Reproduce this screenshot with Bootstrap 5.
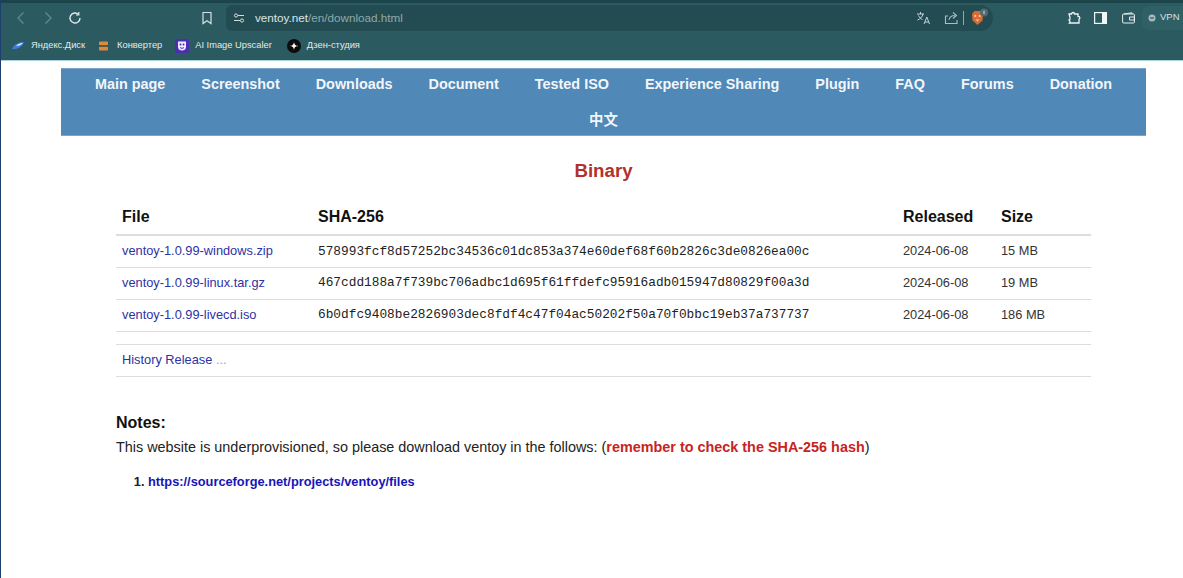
<!DOCTYPE html>
<html lang="en"><head><meta charset="utf-8"><title>Ventoy</title>
<link rel="stylesheet" href="https://cdn.jsdelivr.net/npm/bootstrap@5.3.0/dist/css/bootstrap.min.css">
<style>
html,body{height:578px;overflow:hidden}
body{font-family:"Liberation Sans",Arial,sans-serif;background:#fff;color:#222;border-left:1px solid #1c3f6e}
.chrome-top{background:#2b5a60;border-top:3px solid #1c454b;height:61px;border-bottom:1px solid #a9d3dc;color:#d4e2e3}
.tool-row{height:29px;padding:0 0 0 6px}
.nav-ic{width:27px;display:flex;justify-content:center}
.tool-gap{width:113px}
.url-box{width:767px;height:26px;margin-left:13px;background:#234c52;border-radius:6px 13px 13px 6px;padding:0 0 0 6px;font-size:11.7px;color:#8fa9ab}
.url-box b{font-weight:400;color:#dbe6e7}
.url-addr{margin-left:9px}
.url-tools{width:73px;margin-right:4px}
.vpn-pill{background:#2f6066;border-radius:7px 0 0 7px;height:24px;width:41px;padding:0 0 0 6px;margin-left:-6px;font-size:9.5px;color:#d4e2e3}
.bm-row{height:27px;padding-left:10px;font-size:9.3px;color:#e2ecec}
.bm-item{gap:6px}
.bm-next{margin-left:13px}
.bm-wide{gap:8px}
.bm-last{margin-left:15px}
.site-wrap{margin:7px 37px 0 60px}
.site-menu{background:#5088b8;border:1px solid #7ba6c9;border-width:1px 0}
.site-menu a{display:block;color:#f2f6fa;font-weight:700;font-size:14.4px;line-height:31px;padding:0 18px 1px;text-decoration:none}
.site-menu .menu-cn{font-family:"Noto Sans CJK SC","Liberation Sans",sans-serif;width:100%;text-align:center;line-height:33px;padding:1px 18px 0}
.page-title{color:#b4302a;font-size:18.7px;font-weight:700;line-height:24px;margin:23px 0 0;text-align:center}
.data-wrap{margin:15px 55px 0}
.file-table{margin:0;font-size:12.8px;table-layout:fixed;--bs-table-color:#333}
.file-table th{font-size:16px;color:#111;height:37px;padding:1px 6px 0;vertical-align:middle;border-bottom:2px solid #ddd}
.file-table td{height:32px;padding:0 6px 1px;vertical-align:middle;border-bottom:1px solid #ddd;color:#333}
.file-table a,.hist a{color:#2d32a6;text-decoration:none}
.file-table code{font-family:"Liberation Mono",monospace;font-size:12.8px;color:#222;padding:0}
.hist{margin-top:12px;height:33px;border-top:1px solid #ddd;border-bottom:1px solid #ddd;padding:0 6px;font-size:12.8px;display:flex;align-items:center}
.hist span{color:#9a9ac8}
.notes-head{font-size:16px;font-weight:700;color:#111;line-height:20px;margin:36px 55px 0}
.notes-text{font-size:14.4px;line-height:20px;margin:4px 55px 0;color:#222}
.notes-text strong{color:#c8241e}
.notes-list{margin:15px 55px 0;padding-left:32px;font-size:12.8px;font-weight:700;color:#222;line-height:20px}
.notes-list a{color:#1515b8;text-decoration:none}
</style></head><body>
<header class="chrome-top">
 <div class="tool-row d-flex align-items-center">
  <div class="nav-ic"><svg width="12" height="14" viewBox="0 0 12 14" fill="none" stroke="#5d8a90" stroke-width="1.4"><path d="M8.500 1.500 3 7l5.500 5.500"/></svg></div>
  <div class="nav-ic"><svg width="12" height="14" viewBox="0 0 12 14" fill="none" stroke="#5d8a90" stroke-width="1.4"><path d="M3.500 1.500 9 7l-5.500 5.500"/></svg></div>
  <div class="nav-ic"><svg width="14" height="14" viewBox="0 0 14 14" fill="none" stroke="#dfe9ea" stroke-width="1.4"><path d="M12 7a5 5 0 1 1-1.600-3.700"/><path d="M10.800 1v3H8" stroke-width="1.2"/></svg></div>
  <div class="tool-gap"></div>
  <svg width="12" height="14" viewBox="0 0 12 14" fill="none" stroke="#d4e2e3" stroke-width="1.2"><path d="M2 1.500h8v11L6 9.800 2 12.500z"/></svg>
  <div class="url-box d-flex align-items-center">
   <svg width="14" height="12" viewBox="0 0 14 12" fill="none" stroke="#cfdcdd" stroke-width="1"><circle cx="4" cy="3.500" r="1.600"/><path d="M6 3.500h6M2 8.500h6"/><circle cx="10" cy="8.500" r="1.600"/></svg>
   <span class="url-addr"><b>ventoy.net</b>/en/download.html</span>
   <div class="url-tools ms-auto d-flex align-items-center justify-content-between">
    <svg width="15" height="14" viewBox="0 0 15 14" fill="none" stroke="#c4d4d5" stroke-width="1"><path d="M1 3h7M4.500 1v2M7 3c-.5 3-3 5-5.500 6M2.500 4.500c1 2 2.500 3.500 4 4M8 13l2.800-7 2.700 7M9 11h3.500"/></svg>
    <svg class="ms-2" width="15" height="14" viewBox="0 0 15 14" fill="none" stroke="#a9bebf" stroke-width="1.100"><path d="M4 5H1.500v7.500H13V9"/><path d="M5 9c.5-3 3-4.500 6-4.500M9 1.500l3.500 3-3.500 3"/></svg>
    <span style="width:1px;height:14px;background:#8fa9ab"></span>
    <svg width="20" height="20" viewBox="0 0 20 20"><path d="M3 6l2.500-3h6L14 6l-.6 6.500L8.500 17l-4.900-4.500z" fill="#dd6a30"/><circle cx="6.300" cy="8" r="1.100" fill="#f6d5bd"/><circle cx="10.700" cy="8" r="1.100" fill="#f6d5bd"/><path d="M6.800 11.500h3.400l-1.700 2z" fill="#f6d5bd"/><circle cx="15" cy="4.500" r="4" fill="#55696e"/><rect x="14.500" y="2.800" width="1" height="3.400" fill="#d8e0e0"/></svg>
   </div>
  </div>
  <div class="d-flex align-items-center ms-auto" style="gap:13px">
   <svg width="14" height="14" viewBox="0 0 14 14" fill="none" stroke="#f0f5f5" stroke-width="1.300"><path d="M2 3h2.500a1.500 1.500 0 0 1 3 0H11v2.500a1.500 1.500 0 0 1 1 2.800V12H2.500a2 2 0 0 0-.5-3 2 2 0 0 0 1-2.500z"/></svg>
   <svg width="13" height="12" viewBox="0 0 13 12"><rect x=".6" y=".6" width="11.800" height="10.800" fill="none" stroke="#f0f5f5" stroke-width="1.200"/><rect x="8" y="1" width="4" height="10" fill="#f0f5f5"/></svg>
   <svg width="13" height="12" viewBox="0 0 13 12" fill="none" stroke="#e6eeee" stroke-width="1" style="margin-left:2px"><rect x=".6" y="2" width="11.800" height="9" rx="1"/><path d="M2 2 10 .8V2M7.500 5H12.400V8H7.500z"/></svg>
   <div class="vpn-pill d-flex align-items-center gap-1"><svg width="8" height="8" viewBox="0 0 8 8"><circle cx="4" cy="4" r="3.500" fill="#a8bcbe"/><rect x="2" y="3.300" width="4" height="1.400" fill="#3c6a70"/></svg>VPN</div>
  </div>
 </div>
 <div class="bm-row d-flex align-items-center">
  <div class="bm-item d-flex align-items-center"><svg width="14" height="10" viewBox="0 0 14 10"><path d="M1 8C3 3 8 1 13 1c-1 4-6 8-12 7z" fill="#3c7de0"/><path d="M5 5c2-2 4-3 7-3-2 2-4 3-7 3z" fill="#eaf2ff"/></svg><span>Яндекс.Диск</span></div>
  <div class="bm-item bm-next bm-wide d-flex align-items-center"><svg width="11" height="12" viewBox="0 0 11 12"><path d="M2 1.500h7a1 1 0 0 1 1 1V5H1V2.500a1 1 0 0 1 1-1z" fill="#d98a3e"/><path d="M1 7h9v2.500a1 1 0 0 1-1 1H2a1 1 0 0 1-1-1z" fill="#d98a3e"/><path d="M2 5.200h7v1.600H2z" fill="#6e5a3c"/></svg><span>Конвертер</span></div>
  <div class="bm-item bm-next d-flex align-items-center"><svg width="14" height="14" viewBox="0 0 14 14"><rect width="14" height="14" rx="2" fill="#4a2fb0"/><path d="M3 2.500h8v5a4 4 0 0 1-8 0z" fill="#f2e9ff"/><circle cx="5.500" cy="5.500" r="1" fill="#4a2fb0"/><circle cx="8.500" cy="5.500" r="1" fill="#4a2fb0"/><path d="M5 8.500c1 1 3 1 4 0" fill="none" stroke="#4a2fb0"/></svg><span>AI Image Upscaler</span></div>
  <div class="bm-item bm-last d-flex align-items-center"><svg width="14" height="14" viewBox="0 0 14 14"><circle cx="7" cy="7" r="7" fill="#0c0c0c"/><path d="M7 2.500C7.300 5.800 8.200 6.700 11.500 7 8.200 7.300 7.300 8.200 7 11.500 6.700 8.200 5.800 7.300 2.500 7 5.800 6.700 6.700 5.800 7 2.500z" fill="#fff"/></svg><span>Дзен-студия</span></div>
 </div>
</header>
<div class="site-wrap">
 <nav class="site-menu d-flex flex-wrap justify-content-center">
  <a href="#">Main page</a><a href="#">Screenshot</a><a href="#">Downloads</a><a href="#">Document</a><a href="#">Tested ISO</a><a href="#">Experience Sharing</a><a href="#">Plugin</a><a href="#">FAQ</a><a href="#">Forums</a><a href="#">Donation</a><a href="#" class="menu-cn">中文</a>
 </nav>
 <h1 class="page-title">Binary</h1>
 <div class="data-wrap">
  <table class="table file-table">
   <colgroup><col style="width:196px"><col><col style="width:98px"><col style="width:96px"></colgroup>
   <thead><tr><th>File</th><th>SHA-256</th><th>Released</th><th>Size</th></tr></thead>
   <tbody>
    <tr><td><a href="#">ventoy-1.0.99-windows.zip</a></td><td><code>578993fcf8d57252bc34536c01dc853a374e60def68f60b2826c3de0826ea00c</code></td><td>2024-06-08</td><td>15 MB</td></tr>
    <tr><td><a href="#">ventoy-1.0.99-linux.tar.gz</a></td><td><code>467cdd188a7f739bc706adbc1d695f61ffdefc95916adb015947d80829f00a3d</code></td><td>2024-06-08</td><td>19 MB</td></tr>
    <tr><td><a href="#">ventoy-1.0.99-livecd.iso</a></td><td><code>6b0dfc9408be2826903dec8fdf4c47f04ac50202f50a70f0bbc19eb37a737737</code></td><td>2024-06-08</td><td>186 MB</td></tr>
   </tbody>
  </table>
  <div class="hist"><a href="#">History Release <span>...</span></a></div>
 </div>
 <h2 class="notes-head">Notes:</h2>
 <p class="notes-text">This website is underprovisioned, so please download ventoy in the follows: (<strong>remember to check the SHA-256 hash</strong>)</p>
 <ol class="notes-list"><li><a href="#">https://sourceforge.net/projects/ventoy/files</a></li></ol>
</div>
<script src="https://cdn.jsdelivr.net/npm/bootstrap@5.3.0/dist/js/bootstrap.bundle.min.js"></script>
</body></html>
